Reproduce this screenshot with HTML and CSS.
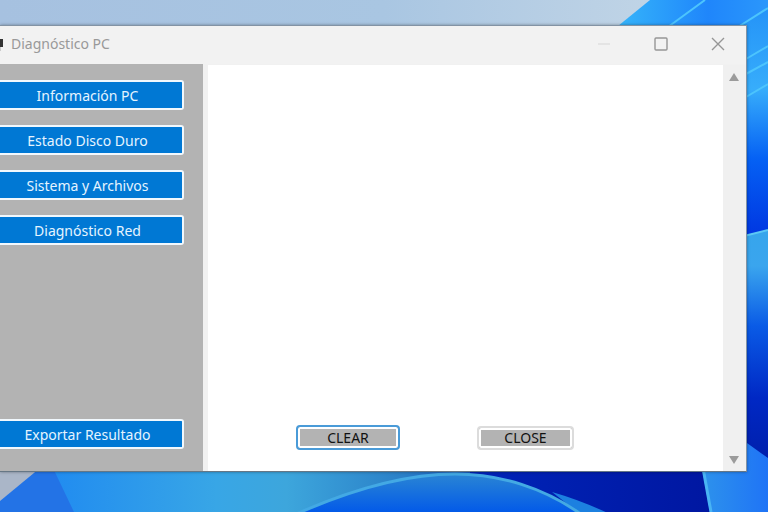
FILE: index.html
```html
<!DOCTYPE html>
<html lang="es">
<head>
<meta charset="utf-8">
<title>Diagnóstico PC</title>
<link rel="stylesheet" href="styles.css">
</head>
<body>
<svg class="wallpaper" viewBox="0 0 768 512" preserveAspectRatio="none" aria-hidden="true">
  <defs>
    <linearGradient id="sky"><stop offset="0" stop-color="#a6c1e0"/><stop offset=".5" stop-color="#a9c6e2"/><stop offset=".85" stop-color="#c0d4e6"/></linearGradient>
    <linearGradient id="petal"><stop offset="0" stop-color="#35b4fa"/><stop offset=".6" stop-color="#1f86fb"/><stop offset="1" stop-color="#2b97fb"/></linearGradient>
    <linearGradient id="side1" x2="0" y2="1"><stop offset="0" stop-color="#2493f8"/><stop offset=".35" stop-color="#37adfb"/><stop offset=".65" stop-color="#0561f4"/><stop offset="1" stop-color="#0034e0"/></linearGradient>
    <linearGradient id="side2" x2="0" y2="1"><stop offset="0" stop-color="#36a5ec"/><stop offset=".15" stop-color="#3aa5ee"/><stop offset=".4" stop-color="#0a5be6"/><stop offset=".7" stop-color="#0028c4"/><stop offset="1" stop-color="#001ea8"/></linearGradient>
    <linearGradient id="floor"><stop offset="0" stop-color="#218cf0"/><stop offset=".35" stop-color="#38a6e6"/><stop offset=".5" stop-color="#3da6dc"/><stop offset=".75" stop-color="#2a80c8"/><stop offset="1" stop-color="#0b3fc0"/></linearGradient>
    <linearGradient id="arc" x2="0" y2="1"><stop offset="0" stop-color="#2a85d4"/><stop offset="1" stop-color="#0057ea"/></linearGradient>
    <linearGradient id="corner"><stop offset="0" stop-color="#2d92ec"/><stop offset="1" stop-color="#1f74f6"/></linearGradient>
    <linearGradient id="night"><stop offset="0" stop-color="#0024b8"/><stop offset="1" stop-color="#00149c"/></linearGradient>
  </defs>
  <rect width="768" height="512" fill="url(#sky)"/>
  <path d="M650 0L618 26V40H768V0Z" fill="url(#petal)"/>
  <path d="M740 26L768 8V240H740Z" fill="url(#side1)"/>
  <g fill="none" stroke="#4cc4fd" stroke-width="2"><path d="M705 0L668 27M768 8L738 27M746 59L768 46M746 74L768 62M746 97L768 84"/></g>
  <path d="M740 237L768 230V470H740Z" fill="url(#side2)"/>
  <path d="M740 237L768 230" stroke="#5cc8f4" stroke-width="2"/>
  <path d="M0 468H42L0 501Z" fill="#aab6c8"/>
  <path d="M40 468H60L76 512H0V501Z" fill="#2373e6"/>
  <path d="M53 468H520V512H74Z" fill="url(#floor)"/>
  <path d="M470 468H768V512H470Z" fill="url(#night)"/>
  <path d="M552 492Q580 500 610 514H580Z" fill="#1c80e0"/>
  <path d="M294 515Q386 474 455 474C500 474 545 488 582 515Z" fill="url(#arc)" stroke="#43a9e4" stroke-width="3"/>
  <path d="M702 468L710 512H768V458L740 438V468Z" fill="url(#corner)"/>
  <path d="M703 468L711 512" stroke="#49b4f4" stroke-width="3"/>
</svg>
<main class="window">
  <header class="titlebar">
    <svg class="app-icon" viewBox="0 0 3 16" aria-hidden="true"><path d="M0 3H3V11H0Z" fill="#333"/><path d="M0 11H1V15H0Z" fill="#ccc"/></svg>
    <h1 class="title">Diagnóstico PC</h1>
    <div class="controls">
      <button class="control" aria-label="Minimizar"><svg viewBox="0 0 14 14"><path d="M1 7H13" stroke="#dedede"/></svg></button>
      <button class="control" aria-label="Maximizar"><svg viewBox="0 0 14 14"><rect x="1" y="1" width="12" height="12" rx="1"/></svg></button>
      <button class="control" aria-label="Cerrar"><svg viewBox="0 0 14 14"><path d="M1 1L13 13M13 1L1 13"/></svg></button>
    </div>
  </header>
  <div class="content">
    <nav class="sidebar">
      <button class="action">Información PC</button>
      <button class="action">Estado Disco Duro</button>
      <button class="action">Sistema y Archivos</button>
      <button class="action">Diagnóstico Red</button>
      <button class="action export">Exportar Resultado</button>
    </nav>
    <section class="output">
      <div class="commands">
        <button class="command focused">CLEAR</button>
        <button class="command">CLOSE</button>
      </div>
    </section>
    <div class="scrollbar">
      <svg viewBox="0 0 12 10" aria-hidden="true"><path d="M6 1L11 9H1Z"/></svg>
      <svg viewBox="0 0 12 10" aria-hidden="true"><path d="M6 9L11 1H1Z"/></svg>
    </div>
  </div>
</main>
</body>
</html>
```
FILE: styles.css
```css
* { box-sizing: border-box; }

body {
  display: flex;
  min-height: 100vh;
  margin: 0;
  padding: 25px 21px 40px 0;
  font: 14px/20px "Noto Sans", "Open Sans", sans-serif;
}

button { font: inherit; }

.wallpaper {
  position: absolute;
  inset: 0;
  z-index: -1;
  width: 100%;
  height: 100%;
}

.window {
  display: flex;
  flex: 1;
  flex-direction: column;
  border: solid #8393a4;
  border-width: 1px 1px 1px 0;
  border-bottom-color: #667785;
  background: #f1f1f1;
  box-shadow: 0 0 3px rgba(0, 0, 0, .35);
}

.titlebar {
  display: flex;
  align-items: center;
  height: 38px;
  padding-bottom: 3px;
  background: #f2f2f2;
}

.app-icon { width: 3px; height: 16px; }

.title {
  flex: 1;
  margin: 0 0 0 8px;
  color: #999;
  font-size: 14px;
  font-weight: 400;
}

.controls { display: flex; }

.control {
  display: grid;
  place-items: center;
  width: 57px;
  height: 35px;
  padding: 0;
  border: 0;
  background: none;
}

.control svg {
  width: 14px;
  height: 14px;
  fill: none;
  stroke: #969696;
  stroke-width: 1.4;
}

.content { display: flex; flex: 1; }

.sidebar {
  display: flex;
  flex: 0 0 203px;
  flex-direction: column;
  gap: 15px;
  padding: 16px 19px 22px 0;
  background: #b3b3b3;
}

.action {
  height: 30px;
  padding: 2px 7px 0 0;
  border: 2px solid #f1f8fd;
  border-left: 0;
  border-radius: 0 3px 3px 0;
  background: #0078d4;
  color: #e5f4ff;
}

.export { margin-top: auto; }

.output {
  display: flex;
  flex: 1;
  flex-direction: column;
  justify-content: flex-end;
  margin: 1px 0 0 5px;
  padding-bottom: 21px;
  background: #fff;
}

.commands {
  display: flex;
  align-items: flex-end;
  justify-content: center;
  gap: 77px;
  padding-right: 61px;
}

.command {
  width: 97px;
  height: 24px;
  padding: 0;
  border: 2px solid #dcdcdc;
  border-radius: 4px;
  background: #b3b3b3;
  box-shadow: inset 0 0 0 2px #fff;
  color: #111;
  line-height: 20px;
}

.focused {
  width: 104px;
  height: 25px;
  border-color: #4a9bd8;
}

.scrollbar {
  display: flex;
  flex: 0 0 23px;
  flex-direction: column;
  align-items: center;
  justify-content: space-between;
  margin-top: 1px;
  padding: 7px 2px 6px 0;
  background: #f0f0f0;
}

.scrollbar svg { width: 12px; height: 10px; fill: #9b9b9b; }
```
